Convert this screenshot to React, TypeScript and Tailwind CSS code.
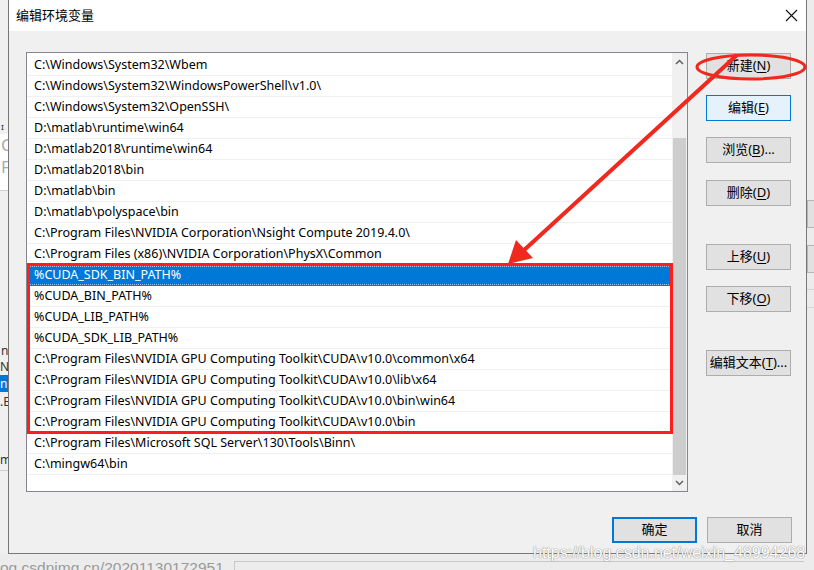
import type { ReactNode } from 'react';

const paths = [
  'C:\\Windows\\System32\\Wbem',
  'C:\\Windows\\System32\\WindowsPowerShell\\v1.0\\',
  'C:\\Windows\\System32\\OpenSSH\\',
  'D:\\matlab\\runtime\\win64',
  'D:\\matlab2018\\runtime\\win64',
  'D:\\matlab2018\\bin',
  'D:\\matlab\\bin',
  'D:\\matlab\\polyspace\\bin',
  'C:\\Program Files\\NVIDIA Corporation\\Nsight Compute 2019.4.0\\',
  'C:\\Program Files (x86)\\NVIDIA Corporation\\PhysX\\Common',
  '%CUDA_SDK_BIN_PATH%',
  '%CUDA_BIN_PATH%',
  '%CUDA_LIB_PATH%',
  '%CUDA_SDK_LIB_PATH%',
  'C:\\Program Files\\NVIDIA GPU Computing Toolkit\\CUDA\\v10.0\\common\\x64',
  'C:\\Program Files\\NVIDIA GPU Computing Toolkit\\CUDA\\v10.0\\lib\\x64',
  'C:\\Program Files\\NVIDIA GPU Computing Toolkit\\CUDA\\v10.0\\bin\\win64',
  'C:\\Program Files\\NVIDIA GPU Computing Toolkit\\CUDA\\v10.0\\bin',
  'C:\\Program Files\\Microsoft SQL Server\\130\\Tools\\Binn\\',
  'C:\\mingw64\\bin',
];

const SELECTED = 10;

function WinButton({
  children,
  focused,
  className = '',
}: {
  children: ReactNode;
  focused?: 'light' | 'strong';
  className?: string;
}) {
  const look =
    focused === 'light'
      ? 'border border-[#0078d7] bg-[#e5f1fb]'
      : focused === 'strong'
        ? 'border-2 border-[#0078d7] bg-[#e1e1e1]'
        : 'border border-[#adadad] bg-[#e1e1e1]';
  return (
    <button
      type="button"
      className={`flex h-[26px] w-[85px] items-center justify-center text-[13px] text-black ${look} ${className}`}
    >
      {children}
    </button>
  );
}

function Key({ k }: { k: string }) {
  return <span className="underline underline-offset-2">{k}</span>;
}

function Chevron({ up }: { up?: boolean }) {
  return (
    <svg width="9" height="6" viewBox="0 0 9 6" className={up ? '' : 'rotate-180'}>
      <path d="M1 5 L4.5 1.5 L8 5" fill="none" stroke="#606060" strokeWidth="1.5" />
    </svg>
  );
}

export default function App() {
  return (
    <div
      className="relative flex h-[570px] w-[814px] flex-col overflow-hidden bg-[#e6e6e6]"
      style={{ fontFamily: '"Noto Sans", "Noto Sans CJK SC", sans-serif' }}
    >
      <div className="flex h-[554px]">
        {/* background window sliver, left */}
        <div className="flex w-[8px] flex-col overflow-hidden bg-[#f0f0f0] text-[#333]">
          <div className="h-[120px]" />
          <div className="h-[14px] overflow-hidden pl-[1px] text-[9px] leading-[14px]">ɪ</div>
          <div className="flex h-[56px] flex-col bg-white pl-[1px] text-[17px] leading-[22px] text-[#aaa]">
            <span>C</span>
            <span>F</span>
          </div>
          <div className="h-[152px] border-t border-[#d0d0d0]" />
          <div className="h-[17px] overflow-hidden pl-[1px] text-[12px] leading-[17px]">n</div>
          <div className="h-[16px] overflow-hidden text-[12px] leading-[16px]">NT</div>
          <div className="h-[17px] overflow-hidden bg-[#0078d7] text-[12px] leading-[17px] text-white">n</div>
          <div className="h-[20px] overflow-hidden text-[12px] leading-[20px]">.E</div>
          <div className="h-[38px]" />
          <div className="h-[20px] overflow-hidden text-[12px] leading-[20px]">m</div>
          <div className="flex-1 border-t border-[#d0d0d0]" />
        </div>

        {/* dialog window */}
        <div className="flex w-[799px] flex-col border-x border-b border-[#777]">
          <div className="flex h-[31px] items-center justify-between bg-white pl-[7px] pr-[8px]">
            <span className="text-[13px] text-black">编辑环境变量</span>
            <svg width="13" height="13" viewBox="0 0 13 13">
              <path d="M1 1 L12 12 M12 1 L1 12" stroke="#111" strokeWidth="1.1" />
            </svg>
          </div>

          <div className="flex flex-1 flex-col bg-[#f0f0f0] pl-[17px] pr-[14px] pt-[21px]">
            <div className="flex gap-[18px]">
              {/* list */}
              <div className="flex h-[440px] w-[662px] border border-[#828790] bg-white">
                <div className="flex flex-1 flex-col pt-[2px]">
                  {paths.map((p, i) => (
                    <div
                      key={p}
                      className={`flex h-[21px] items-center border-b pl-[7px] text-[12.5px] whitespace-nowrap ${
                        i === SELECTED
                          ? 'border-[#0078d7] bg-[#0078d7] text-white outline-1 outline-dotted outline-offset-[-2px] outline-[#9cc6ee]'
                          : 'border-[#f0f0f0] text-black'
                      }`}
                    >
                      {p}
                    </div>
                  ))}
                </div>
                <div className="flex w-[15px] flex-col items-center bg-[#f0f0f0]">
                  <div className="flex h-[17px] items-center justify-center">
                    <Chevron up />
                  </div>
                  <div className="h-[68px]" />
                  <div className="h-[337px] w-[13px] bg-[#cdcdcd]" />
                  <div className="flex flex-1 items-center justify-center">
                    <Chevron />
                  </div>
                </div>
              </div>

              {/* side buttons */}
              <div className="flex flex-col pt-[1px]">
                <WinButton>
                  新建(<Key k="N" />)
                </WinButton>
                <WinButton focused="light" className="mt-[16px]">
                  编辑(<Key k="E" />)
                </WinButton>
                <WinButton className="mt-[16px]">
                  浏览(<Key k="B" />)...
                </WinButton>
                <WinButton className="mt-[17px]">
                  删除(<Key k="D" />)
                </WinButton>
                <WinButton className="mt-[38px]">
                  上移(<Key k="U" />)
                </WinButton>
                <WinButton className="mt-[16px]">
                  下移(<Key k="O" />)
                </WinButton>
                <WinButton className="mt-[38px]">
                  编辑文本(<Key k="T" />)...
                </WinButton>
              </div>
            </div>

            <div className="mt-[25px] flex justify-end gap-[10px]">
              <WinButton focused="strong">确定</WinButton>
              <WinButton>取消</WinButton>
            </div>
          </div>
        </div>

        {/* background window sliver, right */}
        <div className="flex flex-1 flex-col bg-[#ececec]">
          <div className="h-[200px]" />
          <div className="h-[28px] border-y border-l border-[#b5b5b5] bg-[#e1e1e1]" />
          <div className="h-[17px]" />
          <div className="h-[28px] border-y border-l border-[#b5b5b5] bg-[#e1e1e1]" />
          <div className="h-[17px] border-b border-[#d4d4d4]" />
          <div className="h-[18px] border-b border-[#d4d4d4]" />
        </div>
      </div>

      {/* bottom sliver of the page behind */}
      <div className="relative flex-1 overflow-hidden bg-[#ececec]">
        <div
          className="absolute left-[0px] top-[5px] whitespace-nowrap text-[15.5px] leading-[18px] text-[#9a9a9a]"
          style={{ fontFamily: '"Liberation Sans", Arial, sans-serif' }}
        >
          og.csdnimg.cn/20201130172951
        </div>
        <div className="absolute left-[234px] top-[7px] h-[10px] w-[570px] border-l border-t border-[#c8c8c8]" />
      </div>

      {/* red annotation */}
      <svg className="pointer-events-none absolute inset-0" width="814" height="570">
        <rect x="28.5" y="264.5" width="643" height="168" fill="none" stroke="#ff1e1e" strokeWidth="3" />
        <ellipse cx="751" cy="67" rx="54" ry="12" fill="none" stroke="#f0281e" strokeWidth="3" />
        <line x1="737" y1="55" x2="522" y2="252" stroke="#f0281e" strokeWidth="4" />
        <polygon points="508,264 516,240 533,258" fill="#f0281e" />
      </svg>

      {/* watermark */}
      <div
        className="pointer-events-none absolute left-[533px] top-[541px] whitespace-nowrap text-[16px] text-white [text-shadow:0_0_1px_#8a8a8a,0_0_1px_#8a8a8a]"
        style={{ fontFamily: '"Liberation Sans", Arial, sans-serif' }}
      >
        https://blog.csdn.net/weixin_48994268
      </div>
    </div>
  );
}
